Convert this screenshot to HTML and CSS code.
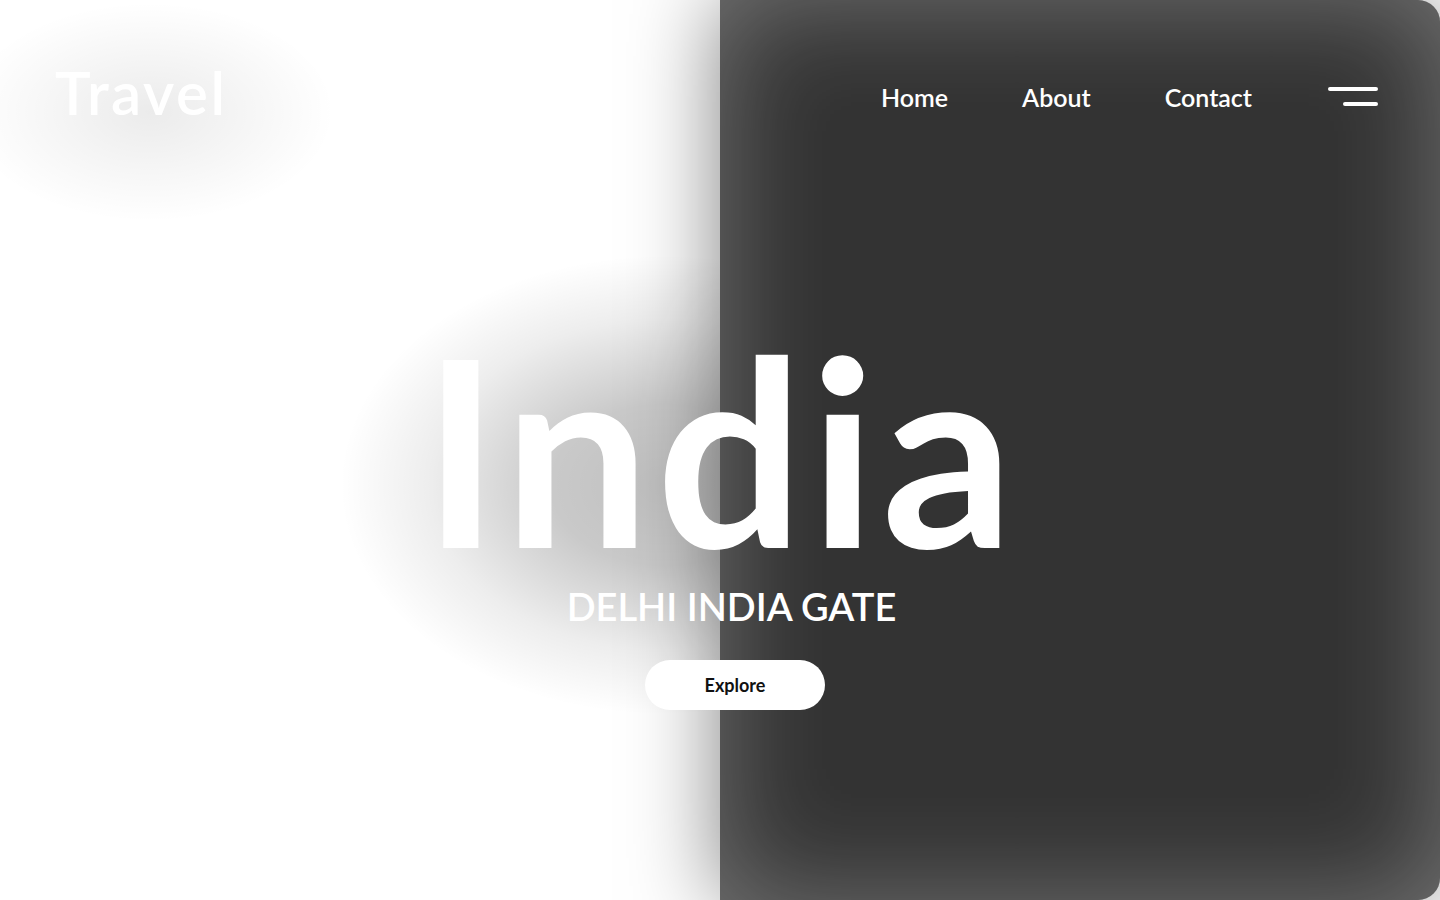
FILE: index.html
```html
<!DOCTYPE html>
<html lang="en">
<head>
<meta charset="utf-8">
<title>Travel - India</title>
<link rel="stylesheet" href="styles.css">
</head>
<body>
<div class="page">
  <div class="panel"></div>
  <div class="content">
    <header class="header">
      <div class="logo">Travel</div>
      <nav class="nav">
        <a class="nav-link" href="#">Home</a>
        <a class="nav-link" href="#">About</a>
        <a class="nav-link" href="#">Contact</a>
        <button class="burger" aria-label="Menu">
          <span class="bar bar-long"></span>
          <span class="bar bar-short"></span>
        </button>
      </nav>
    </header>
    <main class="hero">
      <h1 class="title">India</h1>
      <p class="subtitle">DELHI INDIA GATE</p>
      <a class="explore" href="#">Explore</a>
    </main>
  </div>
</div>
</body>
</html>
```
FILE: styles.css
```css
* { box-sizing: border-box; }
html, body { margin: 0; padding: 0; }
body {
  font-family: "Lato", "Liberation Sans", sans-serif;
  background: #fff;
  overflow: hidden;
}
.page {
  display: grid;
  grid-template-columns: 1fr 1fr;
  grid-template-rows: 900px;
  height: 900px;
  background:
    radial-gradient(ellipse 185px 110px at 150px 112px, rgba(0,0,0,0.08), rgba(0,0,0,0.035) 55%, rgba(0,0,0,0) 100%),
    radial-gradient(ellipse 325px 230px at 665px 485px, rgba(0,0,0,0.25) 0%, rgba(0,0,0,0.21) 35%, rgba(0,0,0,0.07) 72%, rgba(0,0,0,0) 100%),
    #fff;
}
.panel {
  grid-column: 2;
  grid-row: 1;
  background: #333;
  border-radius: 0 22px 22px 0;
  box-shadow: inset 0 0 110px rgba(255,255,255,0.32), 0 0 90px rgba(0,0,0,0.5);
}
.content {
  grid-column: 1 / -1;
  grid-row: 1;
  display: flex;
  flex-direction: column;
}
.header {
  display: flex;
  justify-content: space-between;
  align-items: flex-start;
  padding: 62px 62px 0 55px;
}
.logo {
  color: #fff;
  font-size: 60px;
  line-height: 60px;
  font-weight: 600;
  letter-spacing: 2.5px;
}
.nav {
  display: flex;
  align-items: flex-start;
  gap: 74px;
}
.nav-link {
  color: #fff;
  text-decoration: none;
  font-size: 25px;
  line-height: 25px;
  font-weight: 600;
  margin-top: 23px;
}
.burger {
  margin: 25px 0 0 2px;
  padding: 0;
  border: 0;
  background: transparent;
  width: 50px;
  display: flex;
  flex-direction: column;
  align-items: flex-end;
  gap: 11px;
}
.bar {
  display: block;
  height: 4px;
  border-radius: 2px;
  background: #fff;
}
.bar-long { width: 50px; }
.bar-short { width: 35px; }
.hero {
  display: flex;
  flex-direction: column;
  align-items: center;
  padding-top: 195px;
}
.title {
  margin: 0 0 0 2px;
  color: #fff;
  font-size: 260px;
  line-height: 260px;
  font-weight: 700;
  letter-spacing: 6px;
}
.subtitle {
  margin: 10px 0 0 23px;
  color: #fff;
  font-size: 38px;
  line-height: 38px;
  font-weight: 600;
}
.explore {
  margin: 35px 0 0 30px;
  width: 180px;
  height: 50px;
  border-radius: 25px;
  background: #fff;
  color: #111;
  text-decoration: none;
  font-size: 18px;
  font-weight: 700;
  display: flex;
  align-items: center;
  justify-content: center;
}
```
